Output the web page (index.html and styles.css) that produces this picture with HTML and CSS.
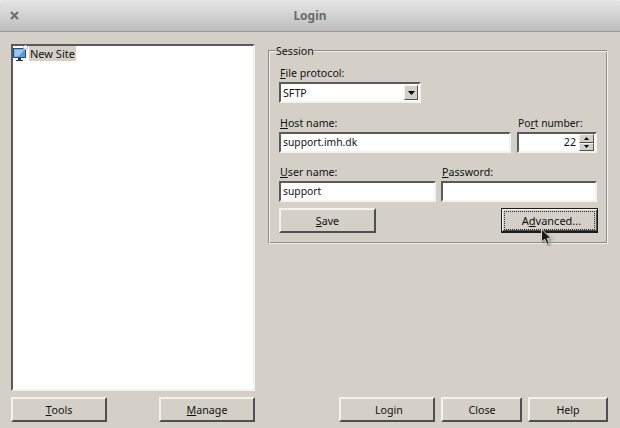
FILE: index.html
```html
<!DOCTYPE html>
<html lang="en">
<head>
<meta charset="utf-8">
<title>Login</title>
<link rel="stylesheet" href="styles.css">
</head>
<body>
<div class="window">
  <header class="titlebar">
    <svg class="close-icon" width="9" height="9" viewBox="0 0 9 9"><path d="M1 1l7 7M8 1l-7 7" stroke="#6f6f6f" stroke-width="2.2" fill="none"/></svg>
    <span class="title">Login</span>
  </header>
  <main class="content">
    <section class="left">
      <div class="tree sunken">
        <div class="tree-item">
          <svg class="site-icon" width="16" height="17" viewBox="0 0 16 17">
            <rect x="0.5" y="3.5" width="12" height="9" fill="#5b9bdf" stroke="#2d4f7c"/>
            <path d="M1.5 4.5h10l-6 7h-4z" fill="#9cc6f0"/>
            <path d="M5 13h3v2h2v1H3v-1h2z" fill="#1f3550"/>
            <circle cx="12.5" cy="2.5" r="2" fill="#fff" stroke="#aab6c4"/>
          </svg>
          <span class="tree-label">New Site</span>
        </div>
      </div>
      <div class="left-buttons">
        <button class="btn btn-tool"><u>T</u>ools</button>
        <button class="btn btn-tool"><u>M</u>anage</button>
      </div>
    </section>
    <section class="right">
      <fieldset class="session">
        <legend>Session</legend>
        <div class="field proto">
          <label><u>F</u>ile protocol:</label>
          <div class="combo sunken"><span class="combo-value">SFTP</span><span class="combo-arrow"><svg width="7" height="4" viewBox="0 0 7 4"><path d="M0 0h7L3.5 4z" fill="#000"/></svg></span></div>
        </div>
        <div class="row host-row">
          <div class="field host">
            <label><u>H</u>ost name:</label>
            <div class="input sunken entry-narrow">support.imh.dk</div>
          </div>
          <div class="field port">
            <label>Po<u>r</u>t number:</label>
            <div class="input sunken spin">
              <span class="spin-value">22</span>
              <span class="spin-btns">
                <span class="spin-btn"><svg width="5" height="3" viewBox="0 0 5 3"><path d="M2.5 0L5 3H0z" fill="#000"/></svg></span>
                <span class="spin-btn"><svg width="5" height="3" viewBox="0 0 5 3"><path d="M0 0h5L2.5 3z" fill="#000"/></svg></span>
              </span>
            </div>
          </div>
        </div>
        <div class="row user-row">
          <div class="field user">
            <label><u>U</u>ser name:</label>
            <div class="input sunken entry-narrow">support</div>
          </div>
          <div class="field password">
            <label><u>P</u>assword:</label>
            <div class="input sunken"></div>
          </div>
        </div>
        <div class="row action-row">
          <button class="btn btn-action"><u>S</u>ave</button>
          <button class="btn btn-action btn-focus"><span class="focus-ring">A<u>d</u>vanced...</span></button>
        </div>
      </fieldset>
      <div class="right-buttons">
        <button class="btn btn-login">Login</button>
        <button class="btn btn-close">Close</button>
        <button class="btn btn-help">Help</button>
      </div>
    </section>
  </main>
  <svg class="cursor" width="14" height="19" viewBox="0 0 14 19"><path d="M1.5 1v13l3.2-2.8 2.2 5.2 2.4-1-2.2-5h4.1z" fill="#1a1a1a" stroke="#d8d8d8" stroke-width="1"/></svg>
</div>
</body>
</html>
```
FILE: styles.css
```css
* { box-sizing: border-box; }
html, body { margin: 0; padding: 0; }
body {
  width: 620px;
  height: 428px;
  overflow: hidden;
  background: #fff;
  font-family: "Noto Sans", "Open Sans", sans-serif;
  font-size: 10.67px;
  color: #111;
}
.window {
  position: relative;
  width: 620px;
  height: 428px;
  display: flex;
  flex-direction: column;
  background: #d4d0c8;
  border-radius: 3px 3px 0 0;
  overflow: hidden;
}
.titlebar {
  position: relative;
  flex: 0 0 32px;
  display: flex;
  align-items: center;
  justify-content: center;
  background: linear-gradient(#e6e6e6, #bdbdbd);
  border-bottom: 1px solid #9a9a9a;
}
.close-icon { position: absolute; left: 10px; top: 11px; }
.title { font-size: 12px; font-weight: 700; color: #6b6b6b; }
.content {
  flex: 1;
  display: flex;
  padding: 12px 12px 6px 11px;
  gap: 13px;
}
.left { width: 244px; display: flex; flex-direction: column; }
.right { flex: 1; display: flex; flex-direction: column; justify-content: space-between; }
.sunken {
  background: #fff;
  border-style: solid;
  border-width: 2px;
  border-color: #5a5a5a #f4f2ee #f4f2ee #5a5a5a;
}
.tree { flex: 0 0 347px; padding: 0; }
.tree-item { display: flex; align-items: flex-start; height: 17px; margin-top: -1px; }
.site-icon { flex: none; margin-right: 1px; }
.tree-label { background: #d4d0c8; padding: 0 1px; line-height: 15px; margin-top: 1px; margin-left: -1px; font-size: 11px; }
.left-buttons { display: flex; justify-content: space-between; margin-top: 6px; }
.btn {
  height: 25px;
  padding: 0;
  font: inherit;
  color: #111;
  background: #d4d0c8;
  border-style: solid;
  border-width: 2px;
  border-color: #f4f2ee #4f4f4f #4f4f4f #f4f2ee;
  display: flex;
  align-items: center;
  justify-content: center;
}
.btn-tool { width: 96px; }
.btn-action { width: 97px; }
.btn-login { width: 96px; padding-left: 4px; }
.btn-close { width: 81px; padding-left: 1px; }
.btn-help { width: 80px; }
.session {
  margin: -1px 0 0;
  padding: 9px 9px 0 10px;
  height: 201px;
  min-width: 0;
  border: 1px solid;
  border-color: #8d8a84 #f4f2ee #f4f2ee #8d8a84;
  box-shadow: inset 1px 1px 0 #f4f2ee, inset -1px -1px 0 #8d8a84;
}
.session legend { padding: 3px 0 0; margin-left: -3px; line-height: 11px; background: #d4d0c8; }
.field label { display: block; line-height: 14px; height: 16px; padding-left: 1px; }
.port label { font-size: 10.3px; }
.input { height: 21px; padding-left: 2px; line-height: 17px; }
.entry-narrow { font-size: 10.3px; }
.combo { width: 142px; height: 21px; display: flex; align-items: center; justify-content: space-between; padding: 0 1px 0 2px; }
.combo-arrow {
  width: 14px;
  height: 15px;
  display: flex;
  align-items: center;
  justify-content: center;
  background: #d4d0c8;
  border: 1px solid;
  border-color: #f4f2ee #4f4f4f #4f4f4f #f4f2ee;
}
.row { display: flex; }
.host-row { margin-top: 13px; gap: 6px; }
.host { width: 232px; }
.port { width: 80px; }
.spin { display: flex; justify-content: space-between; padding: 0; }
.spin-value { flex: 1; text-align: right; padding-right: 3px; }
.spin-btns { width: 15px; display: flex; flex-direction: column; margin-right: 1px; }
.spin-btn {
  flex: 1;
  display: flex;
  align-items: center;
  justify-content: center;
  background: #d4d0c8;
  border: 1px solid;
  border-color: #f4f2ee #4f4f4f #4f4f4f #f4f2ee;
}
.user-row { margin-top: 12px; gap: 5px; }
.user { width: 157px; }
.password { width: 156px; }
.action-row { margin-top: 6px; justify-content: space-between; }
.btn-focus {
  border-color: #1c1c1c;
  border-width: 1px 1px 2px 1px;
  box-shadow: inset 1px 1px 0 #f4f2ee, inset -1px -1px 0 #4f4f4f;
  padding: 2px 2px 1px;
  font-size: 11px;
}
.focus-ring {
  width: 100%;
  height: 100%;
  display: flex;
  align-items: center;
  justify-content: center;
  border: 1px dotted #222;
  padding-left: 4px;
  white-space: pre;
}
.right-buttons { display: flex; gap: 6px; justify-content: flex-end; }
.cursor { position: absolute; left: 540px; top: 228px; filter: drop-shadow(1px 1px 1px rgba(0,0,0,0.35)); }
```
